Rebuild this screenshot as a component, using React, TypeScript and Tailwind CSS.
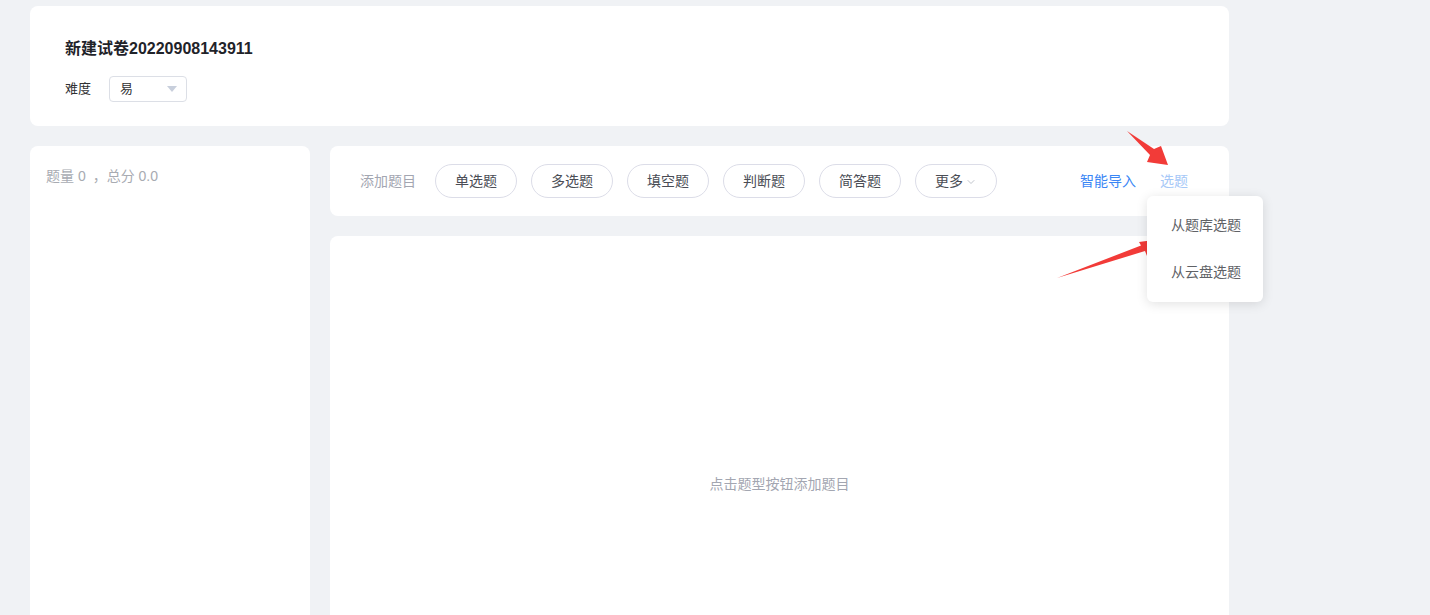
import { ChevronDown } from "lucide-react";

const types = ["单选题", "多选题", "填空题", "判断题", "简答题"];

const Arrows = () => (
  <svg className="pointer-events-none absolute left-0 top-0" width="1430" height="615">
    <polygon
      points="1127,131 1154,149 1161,146 1168,165 1147,162 1150,155"
      fill="#f23b38"
    />
    <polygon
      points="1057,278 1141,245.5 1139,242 1161,239 1147,256 1145,251"
      fill="#f23b38"
    />
  </svg>
);

export default function App() {
  return (
    <div
      className="relative h-[615px] w-[1430px] overflow-hidden bg-[#f0f2f5] text-[#303133]"
      style={{ fontFamily: '"Liberation Sans", "Noto Sans CJK SC", sans-serif' }}
    >
      <div className="box-content flex w-[1199px] flex-col gap-5 pl-[30px] pt-[6px]">
        <div className="h-[120px] rounded-lg bg-white px-[35px] pt-[33px]">
          <h1 className="text-[16px] font-bold leading-5 text-[#1f2329]">新建试卷20220908143911</h1>
          <div className="mt-[17px] flex items-center gap-[18px]">
            <span className="text-[13px] text-[#303133]">难度</span>
            <div className="flex h-[26px] w-[78px] items-center justify-between rounded border border-[#dcdfe6] pl-[10px] pr-[9px]">
              <span className="text-[13px] text-[#303133]">易</span>
              <svg width="10" height="6" viewBox="0 0 10 6">
                <path d="M0 0 H10 L5 6 Z" fill="#c8cfdc" />
              </svg>
            </div>
          </div>
        </div>

        <div className="flex gap-5">
          <div className="h-[480px] w-[280px] shrink-0 rounded-lg bg-white px-4 pt-[20px]">
            <p className="text-[14px] leading-5 text-[#a8abb2]">
              题量 0<span className="ml-[7px] inline-block w-[14px]">，</span>总分 0.0
            </p>
          </div>

          <div className="flex flex-1 flex-col gap-5">
            <div className="relative flex h-[70px] items-center rounded-lg bg-white pl-[30px] pr-[41px]">
              <span className="mr-[19px] text-[14px] text-[#a3a6b1]">添加题目</span>
              <div className="flex gap-[14px]">
                {types.map((t) => (
                  <button
                    key={t}
                    className="flex h-[34px] w-[82px] items-center justify-center rounded-full border border-[#dcdde8] text-[14px] text-[#4a4d55]"
                  >
                    {t}
                  </button>
                ))}
                <button className="flex h-[34px] w-[82px] items-center justify-center gap-0.5 rounded-full border border-[#dcdde8] text-[14px] text-[#4a4d55]">
                  更多
                  <ChevronDown size={12} className="mt-0.5 text-[#c0c4cc]" />
                </button>
              </div>
              <div className="ml-auto flex items-center gap-6 text-[14px]">
                <span className="text-[#3a86f5]">智能导入</span>
                <span className="text-[#a6c8f7]">选题</span>
              </div>

              <div className="absolute right-[-34px] top-[50px] z-10 w-[116px] rounded-md bg-white py-[6px] shadow-[0_2px_12px_rgba(0,0,0,0.12)]">
                <div className="flex h-[47px] items-center pl-[24px] text-[14px] text-[#606266]">从题库选题</div>
                <div className="flex h-[47px] items-center pl-[24px] text-[14px] text-[#606266]">从云盘选题</div>
              </div>
            </div>

            <div className="flex h-[420px] justify-center rounded-lg bg-white pt-[238px]">
              <p className="text-[14px] leading-5 text-[#a3a6b1]">点击题型按钮添加题目</p>
            </div>
          </div>
        </div>
      </div>
      <Arrows />
    </div>
  );
}
